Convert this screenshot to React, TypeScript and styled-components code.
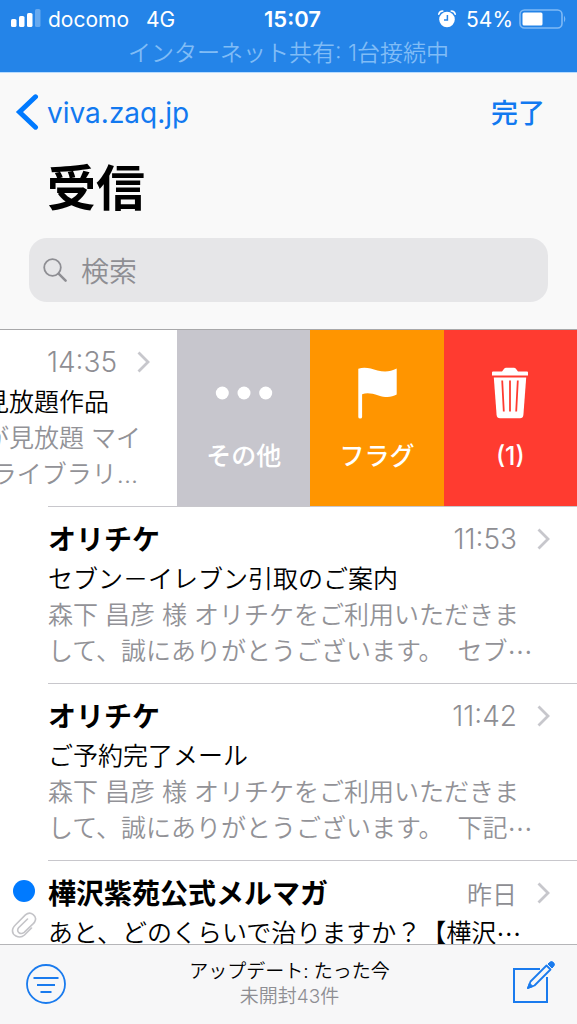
import React from "react";
import styled, { createGlobalStyle } from "styled-components";

const latin = `Inter, "Noto Sans CJK JP", sans-serif`;
const japanese = `"Noto Sans CJK JP", sans-serif`;

const GlobalStyle = createGlobalStyle`
  *, *::before, *::after { box-sizing: border-box; }
  body { margin: 0; background: #fff; color: #000; font-family: ${latin}; }
  button, input { font: inherit; border: 0; padding: 0; margin: 0; background: none; }
  h1, h2, p, ul { margin: 0; padding: 0; }
  svg { display: block; flex: none; }
`;

const Screen = styled.div`
  display: flex;
  flex-direction: column;
  height: 100vh;
  overflow: hidden;
`;

const StatusBar = styled.div`
  flex: none;
  height: 73px;
  padding-top: 4px;
  background: #2484e8;
  border-bottom: 1px solid #b8dcff;
  color: #fff;
`;

const StatusRow = styled.div`
  display: grid;
  grid-template-columns: 1fr auto 1fr;
  align-items: center;
  height: 30px;
  padding: 0 10px;
  font-size: 21px;
`;

const StatusGroup = styled.div<{ $end?: boolean }>`
  display: flex;
  align-items: center;
  gap: ${(p) => (p.$end ? 10 : 7)}px;
  justify-content: ${(p) => (p.$end ? "flex-end" : "flex-start")};
`;

const Network = styled.span`
  margin-left: 10px;
`;

const Clock = styled.span`
  padding-left: 8px;
  font-size: 22px;
  font-weight: 600;
`;

const Battery = styled.span`
  display: flex;
  align-items: center;
  gap: 6px;
`;

const Tethering = styled.p`
  font-size: 23px;
  line-height: 38px;
  font-weight: 350;
  text-align: center;
  color: #80bcf6;
`;

const Header = styled.header`
  flex: none;
  padding: 0 29px 27px;
  background: #f9f9f9;
  border-bottom: 1px solid #a8a8aa;
`;

const Nav = styled.nav`
  display: flex;
  align-items: center;
  justify-content: space-between;
  height: 80px;
  margin: 0 3px 0 -14px;
`;

const BackLink = styled.a`
  display: flex;
  align-items: center;
  gap: 8px;
  font-size: 28px;
  color: #1279f0;
  text-decoration: none;
`;

const DoneButton = styled.button`
  && {
    padding-bottom: 4px;
    font-size: 27px;
    font-weight: 500;
    color: #1279f0;
  }
`;

const Title = styled.h1`
  margin-left: 18px;
  font-size: 49px;
  line-height: 72px;
  font-weight: 700;
`;

const SearchBox = styled.label`
  display: flex;
  align-items: center;
  gap: 14px;
  height: 64px;
  margin-top: 13px;
  padding: 0 14px;
  border-radius: 18px;
  background: #e6e6e8;
  color: #8e8e93;
`;

const SearchInput = styled.input`
  && {
    flex: 1;
    min-width: 0;
    padding-top: 4px;
    font-size: 28px;
    line-height: 40px;
    font-weight: 350;
    outline: none;
  }
  &::placeholder { color: #8e8e93; opacity: 1; }
`;

const List = styled.ul`
  flex: 1;
  min-height: 0;
  overflow: hidden;
  list-style: none;
`;

const Row = styled.li`
  display: flex;
  position: relative;
  height: 177px;
  &::after {
    content: "";
    position: absolute;
    left: 48px;
    right: 0;
    bottom: 0;
    height: 1px;
    background: #c8c7cc;
  }
`;

const Marks = styled.div`
  display: flex;
  flex-direction: column;
  align-items: center;
  flex: none;
  width: 48px;
  padding: 19px 1px 0 0;
  gap: 9px;
`;

const UnreadDot = styled.span`
  width: 22px;
  height: 22px;
  border-radius: 50%;
  background: #007aff;
`;

const Message = styled.div`
  flex: 1;
  min-width: 0;
  padding-top: 9px;
  overflow: hidden;
`;

const Heading = styled.div`
  display: flex;
  align-items: center;
  justify-content: flex-end;
  height: 45px;
  padding-right: 27px;
`;

const Sender = styled.h2`
  flex: 1;
  font-family: ${japanese};
  font-size: 28px;
  line-height: 45px;
  font-weight: 700;
`;

const Time = styled.time`
  margin-right: 20px;
  font-size: 28px;
  font-weight: 350;
  color: #8e8e93;
`;

const DayTime = styled(Time)`
  font-size: 25px;
`;

const Line = styled.p<{ $muted?: boolean; $inset?: number }>`
  display: flex;
  justify-content: ${(p) => (p.$inset ? "flex-end" : "flex-start")};
  padding-right: ${(p) => p.$inset ?? 0}px;
  font-size: 25px;
  line-height: 36px;
  font-weight: 350;
  color: ${(p) => (p.$muted ? "#929297" : "#000")};
  white-space: pre;
`;

const Ellipsis = styled.span`
  font-family: ${japanese};
`;

const Actions = styled.div`
  display: grid;
  grid-template-columns: repeat(3, 1fr);
  flex: none;
  width: 400px;
  height: 176px;
`;

const ActionButton = styled.button<{ $color: string }>`
  && {
    display: flex;
    flex-direction: column;
    align-items: center;
    gap: 19px;
    padding-top: 37px;
    background: ${(p) => p.$color};
    color: #fff;
    font-size: 25px;
    line-height: 36px;
    font-weight: 500;
  }
`;

const Toolbar = styled.footer`
  display: flex;
  align-items: center;
  justify-content: space-between;
  flex: none;
  height: 80px;
  padding: 0 22px 2px 25px;
  background: #f7f7f8;
  border-top: 1px solid #b5b5b8;
`;

const ToolButton = styled.button`
  color: #1a7bee;
`;

const Status = styled.div`
  font-size: 19px;
  line-height: 25px;
  text-align: center;
  font-weight: 350;
`;

const Unread = styled.p`
  color: #8e8e93;
`;

const SignalIcon = () => (
  <svg width="31" height="20" viewBox="0 0 31 20" fill="#fff" aria-hidden="true">
    <rect x="1" y="10" width="5.500" height="8" rx="1.600" />
    <rect x="9" y="7" width="5.500" height="11" rx="1.600" />
    <rect x="17" y="4" width="5.500" height="14" rx="1.600" />
    <rect x="25" y="0" width="5.500" height="18" rx="1.600" opacity="0.3" />
  </svg>
);

const AlarmIcon = () => (
  <svg width="18" height="18" viewBox="0 0 18 18" aria-hidden="true">
    <circle cx="9" cy="9.5" r="7.8" fill="#fff" />
    <path d="M.8 4.2Q1.4 1.2 4.8 1M17.2 4.2Q16.6 1.2 13.2 1" fill="none" stroke="#fff" strokeWidth="1.6" strokeLinecap="round" />
    <path d="M9.4 5v5H6" fill="none" stroke="#2484e8" strokeWidth="1.5" />
  </svg>
);

const BatteryIcon = () => (
  <svg width="48" height="20" viewBox="0 0 48 20" aria-hidden="true">
    <rect x="1" y="1" width="42" height="18" rx="4.5" fill="none" stroke="#7fb9f5" strokeWidth="1.6" />
    <rect x="3.5" y="3.5" width="20" height="13" rx="1.5" fill="#fff" />
    <path d="M45 6.5q2.6 3.5 0 7z" fill="#7fb9f5" />
  </svg>
);

const BackIcon = () => (
  <svg width="24" height="38" viewBox="0 0 24 38" fill="none" aria-hidden="true">
    <path d="M20.500 2.800 4.500 18l16 15.200" stroke="#007aff" strokeWidth="5" strokeLinecap="round" strokeLinejoin="miter" />
  </svg>
);

const SearchIcon = () => (
  <svg width="24" height="24" viewBox="0 0 24 24" fill="none" stroke="currentColor" aria-hidden="true">
    <circle cx="9.5" cy="9.5" r="8.3" strokeWidth="1.8" />
    <path d="m15.6 15.6 7 7" strokeWidth="2.5" strokeLinecap="round" />
  </svg>
);

const ChevronIcon = () => (
  <svg width="13" height="22" viewBox="0 0 13 22" fill="none" aria-hidden="true">
    <path d="m1.5 1.5 9.5 9.5-9.5 9.5" stroke="#c7c7cc" strokeWidth="2.8" />
  </svg>
);

const ClipIcon = () => (
  <svg width="26" height="28" viewBox="0 0 26 28" fill="none" stroke="#c4c4c8" strokeWidth="1.600" strokeLinecap="round" aria-hidden="true">
    <path d="M20.500 17 13.500 24C8.500 28.500-.5 24.500 2 17.300 2.500 15.800 3.500 14.800 4.600 13.700L14.400 3.900C19.600-.7 27 5.100 23.600 11 23.200 11.700 22.700 12.200 22 12.900L13.200 21.300C9 24.400 5 20.400 7.600 16.800L16.500 8" />
  </svg>
);

const MoreIcon = () => (
  <svg width="58" height="52" viewBox="0 0 58 52" fill="#fff" aria-hidden="true">
    <circle cx="7.3" cy="26" r="6.5" />
    <circle cx="29" cy="26" r="6.5" />
    <circle cx="50.7" cy="26" r="6.5" />
  </svg>
);

const FlagIcon = () => (
  <svg width="40" height="52" viewBox="0 0 40 52" fill="#fff" aria-hidden="true">
    <path d="M1.300 1.800C7.500-.4 13.500 1.300 20.500 3.500 27.500 5.400 33.500 4.800 39.700 1.600V27.600C34.500 30.600 28.500 30.800 21.500 28.400 14.500 26.200 10 25.500 5.100 27.200V50Q5.100 51.500 3.200 51.500T1.300 50Z" />
  </svg>
);

const TrashIcon = () => (
  <svg width="38" height="52" viewBox="0 0 38 52" aria-hidden="true">
    <path d="M1 5.500Q1 4.600 2 4.600H11L13.300 1.500Q14 .8 15 .8H23Q24 .8 24.700 1.500L27 4.600H36Q37 4.600 37 5.500V8.500H1Z" fill="#fff" />
    <path d="M2.800 10.500H35.200L32.400 48Q32 51.300 29 51.300H9Q6 51.300 5.600 48Z" fill="#fff" />
    <path d="m11.200 13.500 1.600 31M19 13.500v31M26.800 13.500l-1.600 31" stroke="#ff3b30" strokeWidth="1.800" fill="none" />
  </svg>
);

const FilterIcon = () => (
  <svg width="42" height="42" viewBox="0 0 42 42" fill="none" stroke="currentColor" strokeWidth="1.800" aria-hidden="true">
    <circle cx="21" cy="21" r="19" />
    <path d="M8.500 15h25M12 22h18M15.500 29h11" />
  </svg>
);

const ComposeIcon = () => (
  <svg width="43" height="48" viewBox="0 0 43 48" fill="none" stroke="currentColor" strokeWidth="2" aria-hidden="true">
    <path d="M28 9H2v33h33V17" />
    <path d="m16 28 2.500-6.500L34.500 5.500l4 4L22.500 25.500Z" strokeWidth="1.800" strokeLinejoin="round" />
    <path d="m15.500 28.500 2-5.500 3.500 3.500Z" fill="currentColor" strokeWidth="1" />
    <path d="m36 4 1.500-1.500a2.600 2.600 0 0 1 4 4L40 8Z" fill="currentColor" strokeWidth="1" />
  </svg>
);

type Mail = {
  sender: string;
  time: string;
  subject: string;
  subjectCut?: boolean;
  preview?: [string, string];
  unread?: boolean;
};

const mails: Mail[] = [
  {
    sender: "オリチケ",
    time: "11:53",
    subject: "セブン－イレブン引取のご案内",
    preview: ["森下 昌彦 様 オリチケをご利用いただきま", "して、誠にありがとうございます。  セブ"],
  },
  {
    sender: "オリチケ",
    time: "11:42",
    subject: "ご予約完了メール",
    preview: ["森下 昌彦 様 オリチケをご利用いただきま", "して、誠にありがとうございます。  下記"],
  },
  {
    sender: "樺沢紫苑公式メルマガ",
    time: "昨日",
    subject: "あと、どのくらいで治りますか？【樺沢",
    subjectCut: true,
    unread: true,
  },
];

const MailRow = ({ mail }: { mail: Mail }) => (
  <Row>
    <Marks>
      {mail.unread && (
        <>
          <UnreadDot />
          <ClipIcon />
        </>
      )}
    </Marks>
    <Message>
      <Heading>
        <Sender>{mail.sender}</Sender>
        {mail.time.includes(":") ? <Time>{mail.time}</Time> : <DayTime>{mail.time}</DayTime>}
        <ChevronIcon />
      </Heading>
      <Line>
        {mail.subject}
        {mail.subjectCut && <Ellipsis>…</Ellipsis>}
      </Line>
      {mail.preview && (
        <>
          <Line $muted>{mail.preview[0]}</Line>
          <Line $muted>
            {mail.preview[1]}
            <Ellipsis>…</Ellipsis>
          </Line>
        </>
      )}
    </Message>
  </Row>
);

export default function App() {
  return (
    <Screen lang="ja">
      <GlobalStyle />
      <StatusBar>
        <StatusRow>
          <StatusGroup>
            <SignalIcon />
            <span>docomo</span>
            <Network>4G</Network>
          </StatusGroup>
          <Clock>15:07</Clock>
          <StatusGroup $end>
            <AlarmIcon />
            <Battery>
              54%
              <BatteryIcon />
            </Battery>
          </StatusGroup>
        </StatusRow>
        <Tethering>インターネット共有: 1台接続中</Tethering>
      </StatusBar>

      <Header>
        <Nav>
          <BackLink href="#mailboxes">
            <BackIcon />
            viva.zaq.jp
          </BackLink>
          <DoneButton type="button">完了</DoneButton>
        </Nav>
        <Title>受信</Title>
        <SearchBox>
          <SearchIcon />
          <SearchInput type="text" placeholder="検索" aria-label="検索" />
        </SearchBox>
      </Header>

      <List>
        <Row>
          <Message>
            <Heading>
              <Time>14:35</Time>
              <ChevronIcon />
            </Heading>
            <Line $inset={68}>見放題作品</Line>
            <Line $muted $inset={36}>が見放題 マイ</Line>
            <Line $muted $inset={39}>ライブラリ...</Line>
          </Message>
          <Actions>
            <ActionButton type="button" $color="#c7c6cd">
              <MoreIcon />
              その他
            </ActionButton>
            <ActionButton type="button" $color="#ff9500">
              <FlagIcon />
              フラグ
            </ActionButton>
            <ActionButton type="button" $color="#ff3b30">
              <TrashIcon />
              (1)
            </ActionButton>
          </Actions>
        </Row>
        {mails.map((mail) => (
          <MailRow key={mail.time} mail={mail} />
        ))}
      </List>

      <Toolbar>
        <ToolButton type="button" aria-label="フィルタ">
          <FilterIcon />
        </ToolButton>
        <Status>
          <p>アップデート: たった今</p>
          <Unread>未開封43件</Unread>
        </Status>
        <ToolButton type="button" aria-label="新規メッセージ">
          <ComposeIcon />
        </ToolButton>
      </Toolbar>
    </Screen>
  );
}
